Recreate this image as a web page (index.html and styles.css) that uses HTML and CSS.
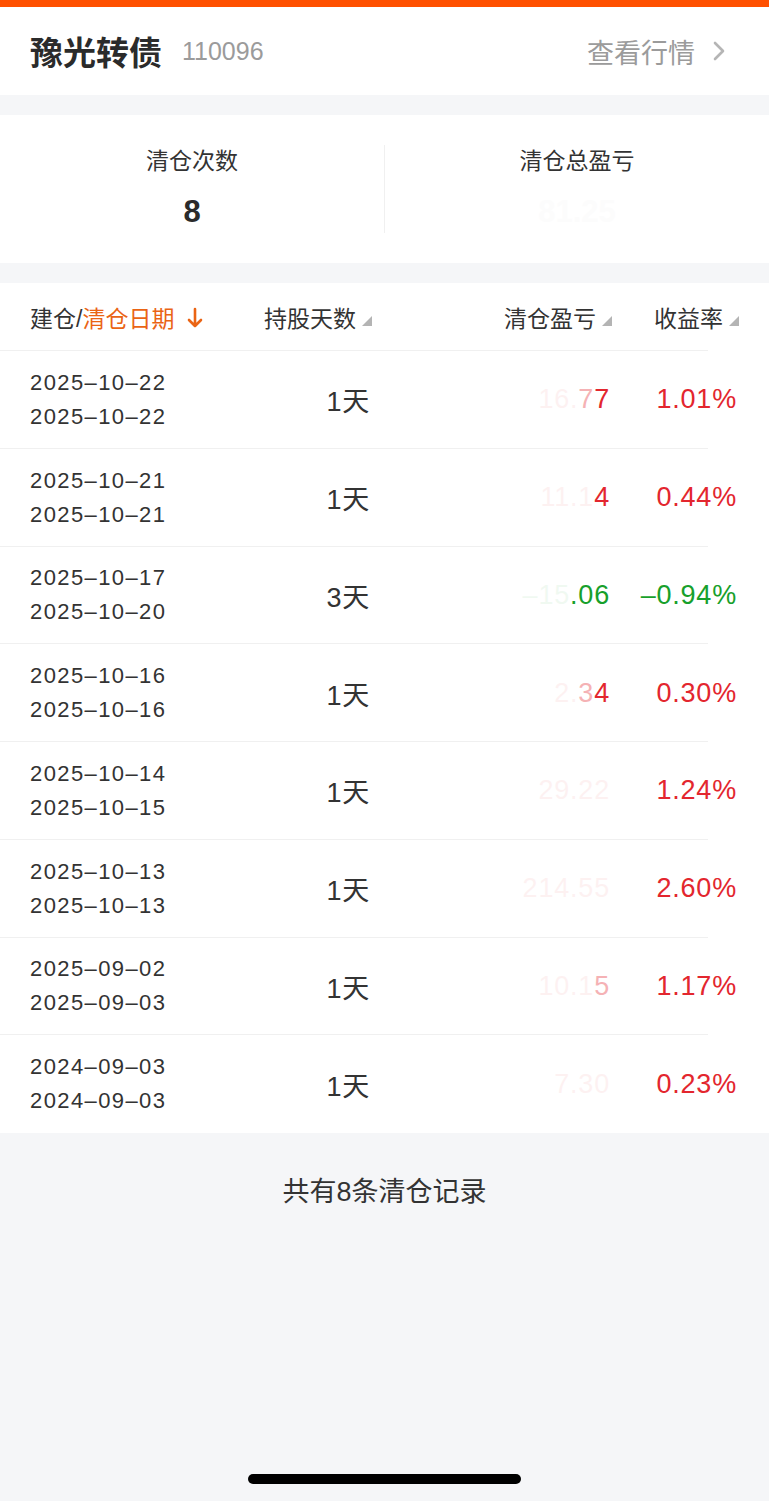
FILE: index.html
```html
<!DOCTYPE html>
<html lang="zh-CN">
<head>
    <meta charset="UTF-8">
    <meta name="viewport" content="width=device-width, initial-scale=1.0">
    <title>豫光转债 清仓记录</title>
    <link rel="stylesheet" href="styles.css">
</head>
<body>
    <div class="page">
        <header class="top">
            <div class="name">
                <span class="title">豫光转债</span>
                <span class="code">110096</span>
            </div>
            <a class="quote" href="#">查看行情
                <svg class="chev" width="14" height="22" viewBox="0 0 14 22"><polyline points="3,3 11,11 3,19" fill="none" stroke="#b5b5b5" stroke-width="2.6" stroke-linecap="round" stroke-linejoin="round"/></svg>
            </a>
        </header>

        <section class="stats">
            <div class="stat">
                <div class="label">清仓次数</div>
                <div class="value">8</div>
            </div>
            <div class="stat">
                <div class="label">清仓总盈亏</div>
                <div class="value masked">81.25</div>
            </div>
        </section>

        <section class="table">
            <div class="row head">
                <div class="h-date">建仓/<span class="active">清仓日期</span>
                    <svg class="arrow" width="16" height="22" viewBox="0 0 16 22"><path d="M8 2 V19 M2 13 L8 19 L14 13" fill="none" stroke="#ea6414" stroke-width="2.6" stroke-linecap="round" stroke-linejoin="round"/></svg>
                </div>
                <div class="h-col">持股天数<svg class="sort" width="10" height="10" viewBox="0 0 10 10"><polygon points="10,0 10,10 0,10" fill="#b4b4b4"/></svg></div>
                <div class="h-col">清仓盈亏<svg class="sort" width="10" height="10" viewBox="0 0 10 10"><polygon points="10,0 10,10 0,10" fill="#b4b4b4"/></svg></div>
                <div class="h-col">收益率<svg class="sort" width="10" height="10" viewBox="0 0 10 10"><polygon points="10,0 10,10 0,10" fill="#b4b4b4"/></svg></div>
            </div>

            <div class="row">
                <div class="c-date"><div>2025–10–22</div><div>2025–10–22</div></div>
                <div class="c-days">1天</div>
                <div class="c-pnl up"><span class="hid">16.</span><span class="half">7</span>7</div>
                <div class="c-rate up">1.01%</div>
            </div>
            <div class="row">
                <div class="c-date"><div>2025–10–21</div><div>2025–10–21</div></div>
                <div class="c-days">1天</div>
                <div class="c-pnl up"><span class="hid">11.</span><span class="hid">1</span>4</div>
                <div class="c-rate up">0.44%</div>
            </div>
            <div class="row">
                <div class="c-date"><div>2025–10–17</div><div>2025–10–20</div></div>
                <div class="c-days">3天</div>
                <div class="c-pnl down"><span class="hid">–15</span>.06</div>
                <div class="c-rate down">–0.94%</div>
            </div>
            <div class="row">
                <div class="c-date"><div>2025–10–16</div><div>2025–10–16</div></div>
                <div class="c-days">1天</div>
                <div class="c-pnl up"><span class="hid">2.</span><span class="half">3</span>4</div>
                <div class="c-rate up">0.30%</div>
            </div>
            <div class="row">
                <div class="c-date"><div>2025–10–14</div><div>2025–10–15</div></div>
                <div class="c-days">1天</div>
                <div class="c-pnl up"><span class="hid">29.22</span></div>
                <div class="c-rate up">1.24%</div>
            </div>
            <div class="row">
                <div class="c-date"><div>2025–10–13</div><div>2025–10–13</div></div>
                <div class="c-days">1天</div>
                <div class="c-pnl up"><span class="hid">214.55</span></div>
                <div class="c-rate up">2.60%</div>
            </div>
            <div class="row">
                <div class="c-date"><div>2025–09–02</div><div>2025–09–03</div></div>
                <div class="c-days">1天</div>
                <div class="c-pnl up"><span class="hid">10.1</span><span class="half">5</span></div>
                <div class="c-rate up">1.17%</div>
            </div>
            <div class="row">
                <div class="c-date"><div>2024–09–03</div><div>2024–09–03</div></div>
                <div class="c-days">1天</div>
                <div class="c-pnl up"><span class="hid">7.30</span></div>
                <div class="c-rate up">0.23%</div>
            </div>
        </section>

        <p class="total">共有8条清仓记录</p>

        <div class="home-bar"></div>
    </div>
</body>
</html>
```

FILE: styles.css
```css
body {
    margin: 0;
    padding: 0;
    background-color: #f5f6f8;
    color: #333333;
    font-family: "Liberation Sans", "Noto Sans CJK SC", sans-serif;
}

.page {
    display: flex;
    flex-direction: column;
    min-height: 1501px;
}

.top {
    display: flex;
    align-items: center;
    justify-content: space-between;
    height: 88px;
    padding: 0 30px;
    background-color: #ffffff;
    border-top: 7px solid #ff5000;
}

.name {
    display: flex;
    align-items: center;
    gap: 20px;
}

.title {
    font-size: 33px;
    font-weight: bold;
    color: #2b2b2b;
}

.code {
    font-size: 25px;
    color: #9b9b9b;
}

.quote {
    display: flex;
    align-items: center;
    gap: 17px;
    font-size: 27px;
    color: #9b9b9b;
    text-decoration: none;
    margin-right: 13px;
}

.stats {
    display: flex;
    margin-top: 20px;
    height: 148px;
    background-color: #ffffff;
}

.stat {
    flex: 1;
    display: flex;
    flex-direction: column;
    align-items: center;
    padding-top: 30px;
}

.stat + .stat {
    border-left: 1px solid #f0f0f0;
    margin: 30px 0;
    padding-top: 0;
}

.label {
    font-size: 23px;
    line-height: 32px;
    color: #333333;
}

.value {
    font-size: 31px;
    line-height: 40px;
    font-weight: bold;
    margin-top: 15px;
    color: #2b2b2b;
}

.value.masked {
    color: #fcfcfc;
}

.table {
    margin-top: 20px;
    background-color: #ffffff;
}

.row {
    display: grid;
    grid-template-columns: 210px 132px 240px 127px;
    align-items: center;
    height: 97.75px;
    padding: 0 30px;
    box-sizing: border-box;
    background: linear-gradient(#f0f0f0, #f0f0f0) no-repeat left bottom / 708px 1px;
}

.row:last-child {
    background: none;
}

.row.head {
    height: 68px;
    font-size: 23px;
    color: #333333;
}

.h-date,
.h-col {
    display: flex;
    align-items: center;
    gap: 6px;
}

.h-date {
    gap: 0;
}

.h-col {
    justify-content: flex-end;
}

.sort {
    margin-top: 8px;
}

.active {
    color: #ea6414;
}

.arrow {
    margin: 2px 0 0 13px;
}

.c-date {
    font-size: 22px;
    line-height: 34px;
    letter-spacing: 1.4px;
    color: #333333;
}

.c-days,
.c-pnl,
.c-rate {
    text-align: right;
    font-size: 27px;
    letter-spacing: 0.8px;
    padding-right: 2px;
}

.up {
    color: #e3262e;
}

.down {
    color: #17a02b;
}

.hid {
    opacity: 0.06;
}

.half {
    opacity: 0.35;
}

.total {
    margin: 0;
    padding-top: 44px;
    text-align: center;
    font-size: 27px;
    line-height: 30px;
    color: #333333;
}

.home-bar {
    margin: auto auto 17px;
    width: 273px;
    height: 10px;
    border-radius: 5px;
    background-color: #000000;
}
```
